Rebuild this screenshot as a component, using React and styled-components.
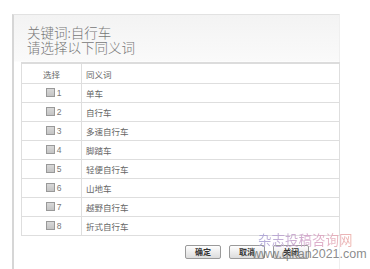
import React from 'react';
import styled, { createGlobalStyle } from 'styled-components';

const synonyms = ['单车', '自行车', '多速自行车', '脚踏车', '轻便自行车', '山地车', '越野自行车', '折式自行车'];

const GlobalStyle = createGlobalStyle`
  html, body {
    margin: 0;
    padding: 0;
    background: #fff;
    overflow: hidden;
  }
  body {
    font-family: "Noto Sans CJK SC", "Liberation Sans", sans-serif;
  }
`;

const Page = styled.div`
  position: relative;
  width: 370px;
  height: 269px;
  padding: 14px 0 0 12px;
  box-sizing: border-box;
  overflow: hidden;
`;

const Panel = styled.div`
  width: 328px;
  height: 270px;
  box-sizing: border-box;
  border-top: 1px solid #e2e2e2;
  border-left: 2px solid #d6d6d6;
  border-right: 1px solid #efefef;
  background: linear-gradient(#f3f3f3 0px, #fafafa 46px, #fff 47px);
`;

const Heading = styled.div`
  padding: 10px 0 0 13px;
  height: 37px;
  font-size: 13.5px;
  line-height: 14.5px;
  color: #777;
  font-weight: 300;
`;

const Table = styled.table`
  margin-left: 7px;
  width: 319px;
  border-collapse: collapse;
  border-top: 2px solid #dcdcdc;
  font-size: 8.5px;
  color: #666;

  td, th {
    border: 1px solid #dedede;
    border-top: none;
    padding: 0;
  }
`;

const HeadCell = styled.th`
  height: 19px;
  font-weight: normal;
  text-align: ${(p) => (p.center ? 'center' : 'left')};
  padding-left: ${(p) => (p.center ? '0' : '4px')} !important;
  width: ${(p) => (p.center ? '59px' : 'auto')};
`;

const Cell = styled.td`
  height: 18px;
  text-align: ${(p) => (p.center ? 'center' : 'left')};
  padding-left: ${(p) => (p.center ? '0' : '4px')} !important;
`;

const Pick = styled.span`
  display: inline-flex;
  align-items: center;
  gap: 2px;
  margin-left: 4px;
  font-family: "Liberation Sans", sans-serif;
  font-size: 8.5px;
  color: #777;
`;

const Box = styled.span`
  display: inline-block;
  width: 7px;
  height: 7px;
  border: 1px solid #999;
  background: linear-gradient(#d8d8d8, #c4c4c4);
`;

const Actions = styled.div`
  display: flex;
  justify-content: flex-end;
  gap: 8px;
  padding: 9px 30px 0 0;
`;

const Button = styled.button`
  width: 36px;
  height: 14px;
  padding: 0;
  border: 1px solid #9a9a9a;
  border-radius: 2px;
  background: linear-gradient(#fefefe, #dcdcdc);
  font-family: "Noto Sans CJK SC", sans-serif;
  font-size: 8px;
  font-weight: bold;
  line-height: 12px;
  color: #333;
`;

const Watermark = styled.div`
  position: absolute;
  left: 252px;
  top: 231px;
  display: flex;
  flex-direction: column;
  align-items: flex-start;
  pointer-events: none;
`;

const MarkName = styled.span`
  font-size: 13.5px;
  line-height: 16px;
  margin-left: 6px;
  background: linear-gradient(90deg, #a9a4d6, #d9a6c8 60%, #eeb0a8);
  -webkit-background-clip: text;
  background-clip: text;
  color: transparent;
  opacity: 0.9;
`;

const MarkUrl = styled.span`
  font-family: "Liberation Sans", sans-serif;
  font-size: 12.5px;
  line-height: 14px;
  color: rgba(110, 110, 110, 0.8);
`;

export default function App() {
  return (
    <Page>
      <GlobalStyle />
      <Panel>
        <Heading>
          关键词:自行车
          <br />
          请选择以下同义词
        </Heading>
        <Table>
          <thead>
            <tr>
              <HeadCell center>选择</HeadCell>
              <HeadCell>同义词</HeadCell>
            </tr>
          </thead>
          <tbody>
            {synonyms.map((word, i) => (
              <tr key={word}>
                <Cell center>
                  <Pick>
                    <Box />
                    {i + 1}
                  </Pick>
                </Cell>
                <Cell>{word}</Cell>
              </tr>
            ))}
          </tbody>
        </Table>
        <Actions>
          <Button>确定</Button>
          <Button>取消</Button>
          <Button>关闭</Button>
        </Actions>
      </Panel>
      <Watermark>
        <MarkName>杂志投稿咨询网</MarkName>
        <MarkUrl>www.qikan2021.com</MarkUrl>
      </Watermark>
    </Page>
  );
}
